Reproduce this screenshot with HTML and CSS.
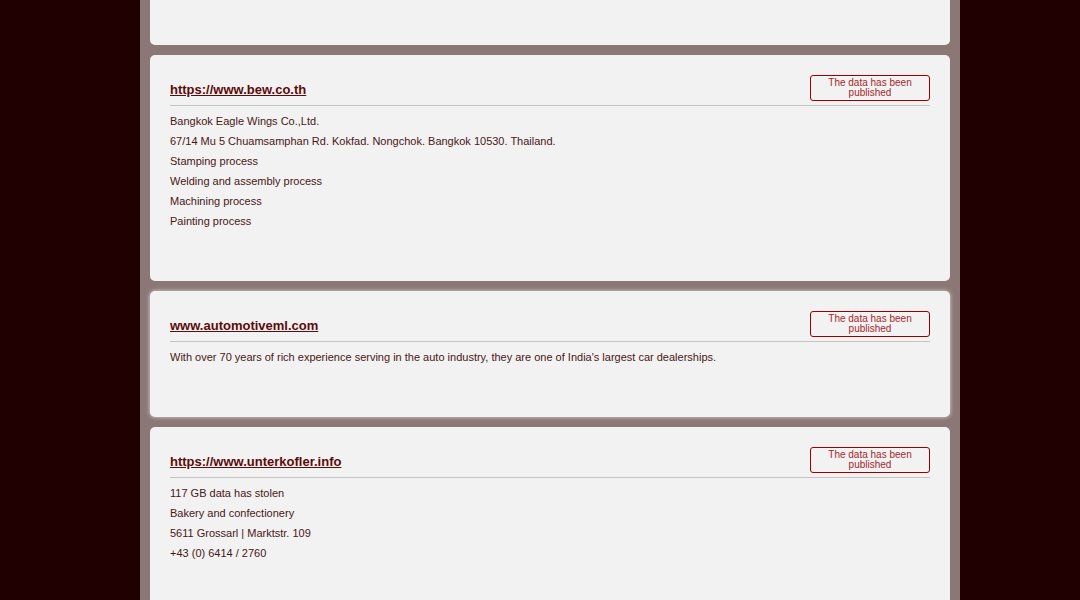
FILE: index.html
```html
<!DOCTYPE html>
<html>
<head>
<meta charset="utf-8">
<link rel="stylesheet" href="styles.css">
</head>
<body>
<div class="page">
  <div class="list">
    <div class="card card-first"></div>

    <div class="card">
      <div class="card-head">
        <a class="title" href="#">https://www.bew.co.th</a>
        <div class="badge">The data has been published</div>
      </div>
      <div class="card-body">
        <p>Bangkok Eagle Wings Co.,Ltd.</p>
        <p>67/14 Mu 5 Chuamsamphan Rd. Kokfad. Nongchok. Bangkok 10530. Thailand.</p>
        <p>Stamping process</p>
        <p>Welding and assembly process</p>
        <p>Machining process</p>
        <p>Painting process</p>
      </div>
    </div>

    <div class="card card-hover">
      <div class="card-head">
        <a class="title" href="#">www.automotiveml.com</a>
        <div class="badge">The data has been published</div>
      </div>
      <div class="card-body">
        <p>With over 70 years of rich experience serving in the auto industry, they are one of India's largest car dealerships.</p>
      </div>
    </div>

    <div class="card">
      <div class="card-head">
        <a class="title" href="#">https://www.unterkofler.info</a>
        <div class="badge">The data has been published</div>
      </div>
      <div class="card-body">
        <p>117 GB data has stolen</p>
        <p>Bakery and confectionery</p>
        <p>5611 Grossarl | Marktstr. 109</p>
        <p>+43 (0) 6414 / 2760</p>
      </div>
    </div>
  </div>
</div>
</body>
</html>
```

FILE: styles.css
```css
html, body {
  margin: 0;
  padding: 0;
  background: #200000;
  font-family: "Liberation Sans", Arial, sans-serif;
}

.page {
  width: 800px;
  margin-left: calc(50% - 400px);
  padding: 0 10px;
  background: #8b7776;
  min-height: 600px;
  overflow: hidden;
}

.list {
  display: flex;
  flex-direction: column;
  gap: 10px;
  margin-top: -20px;
}

.card {
  background: #f2f2f2;
  border-radius: 5px;
  padding: 20px 20px 50px;
}

.card-first {
  height: 65px;
  padding: 0;
}

.card-hover {
  box-shadow: 0 0 4px rgba(255, 255, 255, 0.7);
}

.card-head {
  display: flex;
  justify-content: space-between;
  align-items: center;
  padding-bottom: 4px;
  border-bottom: 1px solid #c4c4c4;
}

.title {
  font-size: 13px;
  font-weight: bold;
  color: #5c0a0a;
  text-decoration: underline;
  margin-top: 2px;
}

.badge {
  box-sizing: border-box;
  width: 120px;
  height: 26px;
  border: 1px solid #990000;
  border-radius: 3px;
  color: #a5262a;
  font-size: 10px;
  line-height: 10px;
  text-align: center;
  padding-top: 2px;
}

.card-body {
  margin-top: 5px;
}

.card-body p {
  margin: 0;
  font-size: 11px;
  line-height: 20px;
  color: #4a1616;
}
```
